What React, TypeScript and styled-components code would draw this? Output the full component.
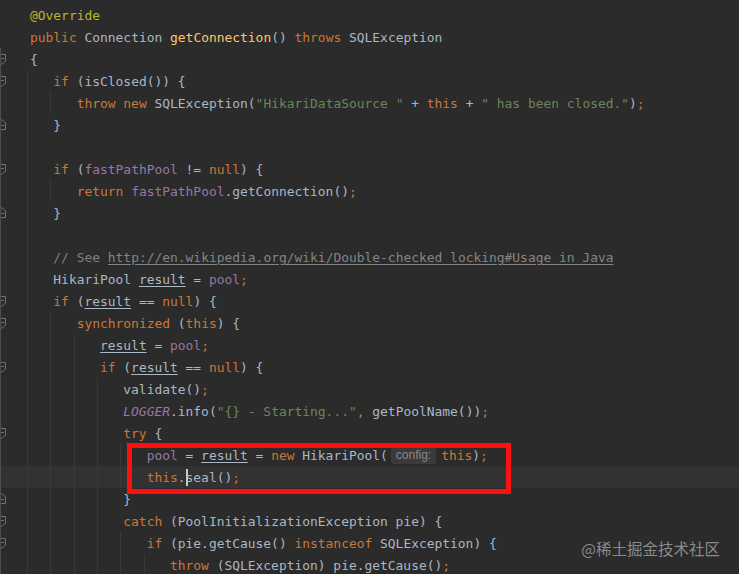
import React from "react";
import styled, { createGlobalStyle, css } from "styled-components";

const GlobalStyle = createGlobalStyle`
  html, body { margin: 0; padding: 0; background: #2b2b2b; overflow: hidden; }
`;

const Editor = styled.div`
  position: relative;
  width: 739px;
  height: 574px;
  overflow: hidden;
  box-sizing: border-box;
  padding-top: 4px;
  background: #2b2b2b;
  font-family: "DejaVu Sans Mono", "Liberation Mono", monospace;
  font-size: 12.93px;
  color: #a9b7c6;
`;

const Line = styled.div<{ $current?: boolean }>`
  display: flex;
  height: 22px;
  align-items: stretch;
  background: ${(p) => (p.$current ? "#323232" : "transparent")};
`;

const Gutter = styled.div<{ $fold?: boolean }>`
  flex: none;
  width: 27px;
  box-sizing: border-box;
  display: flex;
  align-items: center;
  border-left: 1px solid ${(p) => (p.$fold ? "#4d4d4d" : "transparent")};
`;

const Guide = styled.span`
  flex: none;
  width: 3ch;
  box-sizing: border-box;
  border-left: 1px solid #393939;
`;

const Code = styled.div`
  padding: 1px 0 0 3px;
  height: 22px;
  box-sizing: border-box;
  line-height: 22px;
  white-space: pre;
`;

type Kind = "" | "k" | "s" | "a" | "f" | "v" | "i" | "c" | "l" | "u" | "p";

const kindStyles: Record<string, ReturnType<typeof css>> = {
  k: css`color: #cc7832;`,
  s: css`color: #6a8759;`,
  a: css`color: #bbb529;`,
  f: css`color: #ffc66d;`,
  v: css`color: #9876aa;`,
  i: css`color: #9876aa; font-style: italic;`,
  c: css`color: #808080;`,
  l: css`color: #858585; text-decoration: underline; text-underline-offset: 2px;`,
  u: css`text-decoration: underline; text-underline-offset: 2px;`,
  p: css`color: #cc7832;`,
};

const Tok = styled.span<{ $kind: Kind }>`
  ${(p) => kindStyles[p.$kind] || ""}
`;

const Hint = styled.span`
  display: inline-block;
  margin: 0 5px 0 3px;
  padding: 0 5px;
  height: 17px;
  line-height: 17px;
  vertical-align: 1px;
  border-radius: 3px;
  background: #3a3a3a;
  color: #878787;
  font-family: "Liberation Sans", Arial, sans-serif;
  font-size: 12px;
`;

const Caret = styled.span`
  display: inline-block;
  width: 2px;
  margin-right: -2px;
  height: 17px;
  vertical-align: -4px;
  background: #c9c9c9;
`;

const Highlight = styled.div`
  position: absolute;
  left: 127px;
  top: 443px;
  width: 384px;
  height: 51px;
  box-sizing: border-box;
  border: 5px solid #ff0f0f;
`;

const Watermark = styled.div`
  position: absolute;
  right: 19px;
  bottom: 18px;
  line-height: 1;
  font-family: "Noto Sans CJK SC", "Noto Sans", sans-serif;
  font-size: 15.5px;
  color: #8a8a8a;
`;

const FoldIcon = styled.svg`
  flex: none;
  display: block;
`;

function FoldMarker({ type }: { type: "open" | "close" }) {
  const d =
    type === "open"
      ? "M0 2.5 H4.5 V9 L1.5 12 H0 M0 6.5 H3"
      : "M0 11.5 H4.5 V5 L1.5 2 H0 M0 7.5 H3";
  return (
    <FoldIcon width="6" height="14" viewBox="0 0 6 14">
      <path d={d} fill="none" stroke="#707070" strokeWidth="1" />
    </FoldIcon>
  );
}

type LineDef = { indent: number; src: string; fold?: "open" | "close" };

const lines: LineDef[] = [
  { indent: 0, src: "[a:@Override]" },
  { indent: 0, src: "[k:public] Connection [f:getConnection]() [k:throws] SQLException" },
  { indent: 0, src: "{", fold: "open" },
  { indent: 1, src: "[k:if] (isClosed()) {", fold: "open" },
  { indent: 2, src: '[k:throw] [k:new] SQLException([s:"HikariDataSource "] + [k:this] + [s:" has been closed."])[p:;]' },
  { indent: 1, src: "}", fold: "close" },
  { indent: 1, src: "" },
  { indent: 1, src: "[k:if] ([v:fastPathPool] != [k:null]) {", fold: "open" },
  { indent: 2, src: "[k:return] [v:fastPathPool].getConnection()[p:;]" },
  { indent: 1, src: "}", fold: "close" },
  { indent: 1, src: "" },
  { indent: 1, src: "[c:// See ][l:http://en.wikipedia.org/wiki/Double-checked_locking#Usage_in_Java]" },
  { indent: 1, src: "HikariPool [u:result] = [v:pool][p:;]" },
  { indent: 1, src: "[k:if] ([u:result] == [k:null]) {", fold: "open" },
  { indent: 2, src: "[k:synchronized] ([k:this]) {", fold: "open" },
  { indent: 3, src: "[u:result] = [v:pool][p:;]" },
  { indent: 3, src: "[k:if] ([u:result] == [k:null]) {", fold: "open" },
  { indent: 4, src: "validate()[p:;]" },
  { indent: 4, src: '[i:LOGGER].info([s:"{} - Starting..."][p:,] getPoolName())[p:;]' },
  { indent: 4, src: "[k:try] {", fold: "open" },
  { indent: 5, src: "[v:pool] = [u:result] = [k:new] HikariPool([h:config:][k:this])[p:;]" },
  { indent: 5, src: "[k:this].[x:]seal()[p:;]" },
  { indent: 4, src: "}", fold: "close" },
  { indent: 4, src: "[k:catch] (PoolInitializationException pie) {", fold: "open" },
  { indent: 5, src: "[k:if] (pie.getCause() [k:instanceof] SQLException) {", fold: "open" },
  { indent: 6, src: "[k:throw] (SQLException) pie.getCause()[p:;]" },
];

function parse(src: string): [string, string][] {
  const re = /\[(\w):([^\]]*)\]/g;
  const out: [string, string][] = [];
  let last = 0;
  let m: RegExpExecArray | null;
  while ((m = re.exec(src))) {
    if (m.index > last) out.push(["", src.slice(last, m.index)]);
    out.push([m[1], m[2]]);
    last = re.lastIndex;
  }
  if (last < src.length) out.push(["", src.slice(last)]);
  return out;
}

function renderTokens(src: string) {
  return parse(src).map(([kind, text], i) => {
    if (kind === "h") return <Hint key={i}>{text}</Hint>;
    if (kind === "x") return <Caret key={i} />;
    return (
      <Tok key={i} $kind={kind as Kind}>
        {text}
      </Tok>
    );
  });
}

const CURRENT_LINE = 21;

export default function App() {
  return (
    <>
      <GlobalStyle />
      <Editor>
        {lines.map((ln, idx) => (
          <Line key={idx} $current={idx === CURRENT_LINE}>
            <Gutter $fold={idx >= 2}>{ln.fold && <FoldMarker type={ln.fold} />}</Gutter>
            {Array.from({ length: ln.indent }).map((_, g) => (
              <Guide key={g} />
            ))}
            <Code>{renderTokens(ln.src)}</Code>
          </Line>
        ))}
        <Highlight />
        <Watermark>@稀土掘金技术社区</Watermark>
      </Editor>
    </>
  );
}
